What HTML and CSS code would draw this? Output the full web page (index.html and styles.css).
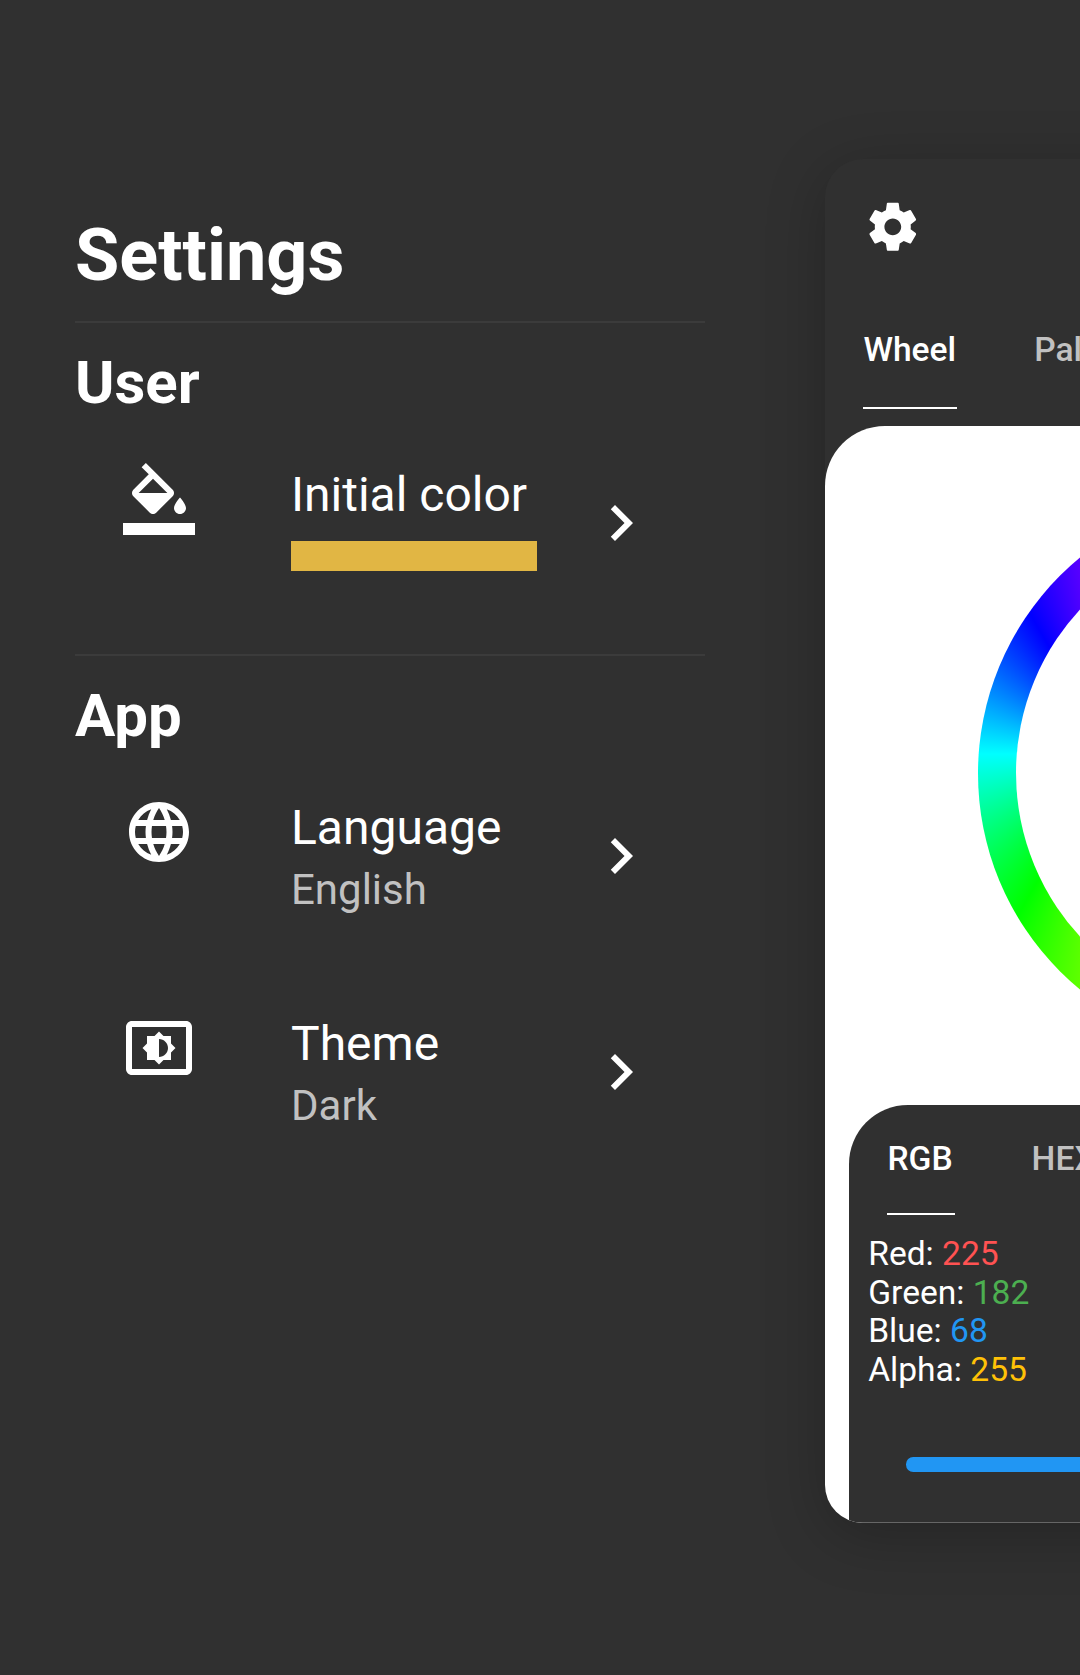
FILE: index.html
```
<!DOCTYPE html>
<html lang="en">
<head>
<meta charset="utf-8">
<title>Settings</title>
<link rel="stylesheet" href="styles.css">
</head>
<body>
<main class="screen">
  <section class="settings">
    <h1 class="title">Settings</h1>
    <div class="group">
      <h2 class="heading">User</h2>
      <div class="row">
        <svg class="icon" viewBox="0 0 24 24"><path d="M16.56 8.94L7.62 0 6.21 1.41l2.38 2.38-5.15 5.15c-.59.59-.59 1.54 0 2.12l5.5 5.5c.29.29.68.44 1.06.44s.77-.15 1.06-.44l5.5-5.5c.59-.58.59-1.53 0-2.12zM5.21 10L10 5.21 14.79 10H5.21zM19 11.5s-2 2.17-2 3.5c0 1.1.9 2 2 2s2-.9 2-2c0-1.33-2-3.500-2-3.500z"/><path d="M0 20h24v4H0z"/></svg>
        <div class="label"><span class="name">Initial color</span><span class="swatch"></span></div>
        <svg class="chevron" viewBox="0 0 24 24"><path d="M10 6L8.590 7.410 13.170 12l-4.580 4.590L10 18l6-6z"/></svg>
      </div>
    </div>
    <div class="group">
      <h2 class="heading">App</h2>
      <div class="row">
        <svg class="icon" viewBox="0 0 24 24"><path d="M11.990 2C6.470 2 2 6.480 2 12s4.470 10 9.990 10C17.520 22 22 17.520 22 12S17.520 2 11.990 2zm6.930 6h-2.950c-.32-1.250-.78-2.450-1.380-3.560 1.840.63 3.370 1.910 4.330 3.560zM12 4.040c.83 1.200 1.480 2.530 1.910 3.960h-3.820c.43-1.430 1.080-2.760 1.910-3.960zM4.260 14C4.100 13.360 4 12.690 4 12s.1-1.360.26-2h3.380c-.08.66-.14 1.320-.14 2s.06 1.340.14 2H4.260zm.82 2h2.950c.32 1.250.78 2.450 1.380 3.560-1.840-.63-3.370-1.900-4.330-3.560zm2.950-8H5.080c.96-1.660 2.490-2.930 4.330-3.560C8.810 5.550 8.350 6.750 8.030 8zM12 19.960c-.83-1.200-1.480-2.530-1.910-3.960h3.820c-.43 1.430-1.080 2.760-1.910 3.960zM14.340 14H9.660c-.09-.66-.16-1.320-.16-2s.07-1.350.16-2h4.680c.09.65.16 1.320.16 2s-.07 1.340-.16 2zm.25 5.560c.6-1.110 1.060-2.310 1.380-3.560h2.950c-.96 1.650-2.490 2.930-4.330 3.560zM16.360 14c.08-.66.14-1.320.14-2s-.06-1.340-.14-2h3.380c.16.64.26 1.310.26 2s-.1 1.360-.26 2h-3.380z"/></svg>
        <div class="label"><span class="name">Language</span><span class="value">English</span></div>
        <svg class="chevron" viewBox="0 0 24 24"><path d="M10 6L8.590 7.410 13.170 12l-4.580 4.590L10 18l6-6z"/></svg>
      </div>
      <div class="row">
        <svg class="icon" viewBox="0 0 24 24"><path d="M21 3H3c-1.100 0-2 .9-2 2v14c0 1.100.9 2 2 2h18c1.100 0 2-.9 2-2V5c0-1.100-.9-2-2-2zm0 16.010H3V4.990h18v14.020zM8 16h2.500l1.500 1.500 1.500-1.500H16v-2.500l1.500-1.500-1.500-1.500V8h-2.500L12 6.500 10.500 8H8v2.500L6.500 12 8 13.500V16zm4-7c1.660 0 3 1.340 3 3s-1.340 3-3 3V9z"/></svg>
        <div class="label"><span class="name">Theme</span><span class="value">Dark</span></div>
        <svg class="chevron" viewBox="0 0 24 24"><path d="M10 6L8.590 7.410 13.170 12l-4.580 4.590L10 18l6-6z"/></svg>
      </div>
    </div>
  </section>

  <section class="preview">
    <header class="toolbar">
      <svg class="gear" viewBox="0 0 24 24"><path d="M19.430 12.980c.04-.32.07-.64.07-.98s-.03-.66-.07-.98l2.110-1.650c.19-.15.24-.42.12-.64l-2-3.460c-.12-.22-.39-.3-.61-.22l-2.490 1c-.52-.4-1.080-.73-1.690-.98l-.38-2.650C14.460 2.180 14.250 2 14 2h-4c-.25 0-.46.18-.49.42l-.38 2.650c-.61.25-1.170.59-1.690.98l-2.490-1c-.23-.09-.49 0-.61.22l-2 3.460c-.13.22-.07.49.12.64l2.110 1.650c-.04.32-.07.65-.07.98s.03.66.07.98l-2.110 1.650c-.19.15-.24.42-.12.64l2 3.460c.12.22.39.3.61.22l2.490-1c.52.4 1.080.73 1.690.98l.38 2.650c.03.24.24.42.49.42h4c.25 0 .46-.18.49-.42l.38-2.650c.61-.25 1.170-.59 1.690-.98l2.490 1c.23.09.49 0 .61-.22l2-3.460c.12-.22.07-.49-.12-.64l-2.110-1.650zM12 15.500c-1.930 0-3.500-1.570-3.500-3.500s1.570-3.500 3.500-3.500 3.500 1.570 3.500 3.500-1.570 3.500-3.500 3.500z"/></svg>
    </header>
    <nav class="tabs">
      <span class="tab active">Wheel</span>
      <span class="tab">Palette</span>
    </nav>
    <div class="canvas">
      <div class="wheel"><div class="wheel-hole"></div></div>
      <div class="card">
        <nav class="formats">
          <span class="tab active">RGB</span>
          <span class="tab">HEX</span>
        </nav>
        <ul class="channels">
          <li>Red: <span class="red">225</span></li>
          <li>Green: <span class="green">182</span></li>
          <li>Blue: <span class="blue">68</span></li>
          <li>Alpha: <span class="alpha">255</span></li>
        </ul>
        <div class="slider"></div>
      </div>
    </div>
  </section>
</main>
</body>
</html>
```
FILE: styles.css
```
* {
  box-sizing: border-box;
}

body {
  margin: 0;
  background: #303030;
  color: #fff;
  font-family: Roboto, "Liberation Sans", sans-serif;
  overflow: hidden;
}

svg {
  display: block;
  fill: currentColor;
}

.screen {
  display: flex;
  height: 1675px;
  width: 1080px;
  overflow: hidden;
}

/* Settings column */
.settings {
  flex: none;
  width: 630px;
  margin: 214px 120px 0 75px;
}

.title {
  margin: 0 0 23px;
  font-size: 72px;
  line-height: 84px;
  font-weight: 700;
}

.group {
  border-top: 2px solid #3b3b3b;
  padding-top: 25px;
}

.heading {
  margin: 0 0 45px;
  font-size: 60px;
  line-height: 70px;
  font-weight: 700;
}

.row {
  display: grid;
  grid-template-columns: 168px 294px 72px;
  align-items: start;
  height: 191px;
  padding-left: 48px;
}

.row + .row {
  margin-top: 25px;
}

.icon,
.chevron {
  width: 72px;
  height: 72px;
}

.chevron {
  margin-top: 24px;
}

.label {
  display: flex;
  flex-direction: column;
  padding-top: 4px;
}

.name {
  font-size: 48px;
  line-height: 56px;
}

.value {
  margin-top: 10px;
  font-size: 42px;
  line-height: 48px;
  color: #c1c1c1;
}

.swatch {
  width: 246px;
  height: 30px;
  margin-top: 18px;
  background: #e1b644;
}

/* App preview, sliding off the right edge */
.preview {
  display: flex;
  flex-direction: column;
  flex: none;
  width: 864px;
  height: 1364px;
  margin-top: 159px;
  border-radius: 38px;
  background: #303030;
  box-shadow: 0 12px 60px rgba(0, 0, 0, 0.24);
  overflow: hidden;
}

.toolbar {
  height: 134px;
  padding: 39px 0 0 39px;
}

.gear {
  width: 57.600px;
  height: 57.600px;
}

.tabs,
.formats {
  display: flex;
  font-size: 33.600px;
  line-height: 40px;
  font-weight: 500;
}

.tabs {
  height: 133px;
  padding: 37px 0 0 38.400px;
  gap: 77px;
}

.tab {
  color: #c1c1c1;
}

.active {
  color: #fff;
  border-bottom: 2px solid #fff;
}

.tabs .active {
  height: 79px;
  padding-right: 1px;
}

.canvas {
  display: flex;
  flex-direction: column;
  flex: 1;
  border-radius: 60px 0 0 0;
  background: #fff;
}

.wheel {
  flex: none;
  width: 559px;
  height: 559px;
  margin: 67.500px auto 52.900px;
  padding: 38.400px;
  border-radius: 50%;
  background: conic-gradient(from 90deg at 133px 260px, #f00, #ff0, #0f0, #0ff, #00f, #f0f, #f00);
}

.wheel-hole {
  height: 100%;
  border-radius: 50%;
  background: #fff;
}

.card {
  flex: 1;
  margin-left: 24px;
  border-bottom: 1px solid #666;
  border-radius: 59px 0 0 0;
  background: #303030;
}

.formats {
  height: 110px;
  padding: 34px 0 0 38.400px;
  gap: 77px;
}

.formats .active {
  height: 76px;
  padding-right: 2px;
}

.channels {
  margin: 19.600px 0 0 19.200px;
  padding: 0;
  list-style: none;
  font-size: 33.600px;
  line-height: 38.640px;
}

.red {
  color: #ff5252;
}

.green {
  color: #4caf50;
}

.blue {
  color: #2196f3;
}

.alpha {
  color: #ffc107;
}

.slider {
  height: 14.400px;
  margin: 67.600px 57.600px 0 57.200px;
  border-radius: 7.200px;
  background: #2196f3;
}
```
